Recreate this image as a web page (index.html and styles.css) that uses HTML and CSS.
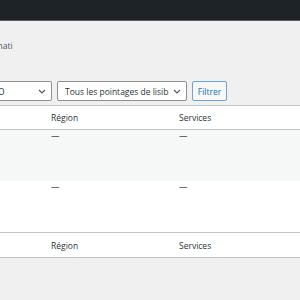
FILE: index.html
```html
<!DOCTYPE html>
<html lang="fr">
<head>
  <meta charset="UTF-8" />
  <meta name="viewport" content="width=device-width, initial-scale=1.0" />
  <title>Destinations</title>
  <link rel="stylesheet" href="styles.css">
</head>
<body>
  <div class="adminbar"></div>

  <div class="wrap">
    <p class="views">Toutes les destinati</p>

    <div class="filters">
      <div class="select select-seo">
        <span class="select-text">Tous les pointages SEO</span>
        <svg class="chevron" width="8" height="5" viewBox="0 0 8 5"><path d="M1 1l3 3 3-3" fill="none" stroke="#50575e" stroke-width="1.1"/></svg>
      </div>
      <div class="select select-read">
        <span class="select-text">Tous les pointages de lisibilité</span>
        <svg class="chevron" width="8" height="5" viewBox="0 0 8 5"><path d="M1 1l3 3 3-3" fill="none" stroke="#50575e" stroke-width="1.1"/></svg>
      </div>
      <button class="button">Filtrer</button>
    </div>

    <table class="list-table">
      <thead>
        <tr>
          <th class="col-title">Titre</th>
          <th class="col-region">Région</th>
          <th class="col-services">Services</th>
        </tr>
      </thead>
      <tbody>
        <tr class="alt">
          <td class="col-title">Destination 1</td>
          <td class="empty">—</td>
          <td class="empty">—</td>
        </tr>
        <tr>
          <td class="col-title">Destination 2</td>
          <td class="empty">—</td>
          <td class="empty">—</td>
        </tr>
      </tbody>
      <tfoot>
        <tr>
          <th class="col-title">Titre</th>
          <th class="col-region">Région</th>
          <th class="col-services">Services</th>
        </tr>
      </tfoot>
    </table>
  </div>
</body>
</html>
```

FILE: styles.css
```css
body {
  margin: 0;
  font-family: 'Open Sans', sans-serif;
  font-size: 8.5px;
  background: #f0f0f1;
  color: #3c434a;
  overflow: hidden;
}

.adminbar {
  height: 20px;
  background: #1d2327;
  border-bottom: 1px solid #5d6166;
}

.wrap {
  margin-left: -160px;
  width: 520px;
}

.views {
  margin: 16px 0 0 96px;
  line-height: 18px;
  color: #50575e;
}

.filters {
  display: flex;
  gap: 5px;
  height: 20px;
  margin-top: 26px;
  padding-left: 65px;
}

.select {
  display: flex;
  align-items: center;
  box-sizing: border-box;
  height: 20px;
  padding: 0 5px 0 7px;
  background: #fff;
  border: 1px solid #8c8f94;
  border-radius: 2px;
  color: #2c3338;
}

.select-seo {
  width: 147px;
}

.select-read {
  width: 130px;
}

.select-text {
  flex: 1;
  overflow: hidden;
  white-space: nowrap;
  margin-right: 4px;
}

.chevron {
  flex: none;
}

.button {
  box-sizing: border-box;
  width: 35px;
  height: 20px;
  padding: 0;
  background: #f6f7f7;
  border: 1px solid #6fa3d3;
  border-radius: 2px;
  color: #2271b1;
  font-family: inherit;
  font-size: 8.5px;
}

.list-table {
  margin-top: 4px;
  width: 100%;
  table-layout: fixed;
  border-spacing: 0;
  background: #fff;
  border: 1px solid #c3c4c7;
}

.list-table th,
.list-table td {
  padding: 0 6px;
  text-align: left;
  font-weight: normal;
  color: #2c3338;
}

.col-title {
  width: 192px;
}

.col-region {
  width: 116px;
}

thead th {
  height: 23px;
  border-bottom: 1px solid #c3c4c7;
}

tfoot th {
  height: 24px;
  border-top: 1px solid #c3c4c7;
}

tbody td {
  height: 51px;
  vertical-align: top;
  padding-top: 6px;
  box-sizing: border-box;
  line-height: 12px;
}

tbody tr.alt td {
  background: #f6f7f7;
}

.empty {
  color: #a7aaad;
}
```
